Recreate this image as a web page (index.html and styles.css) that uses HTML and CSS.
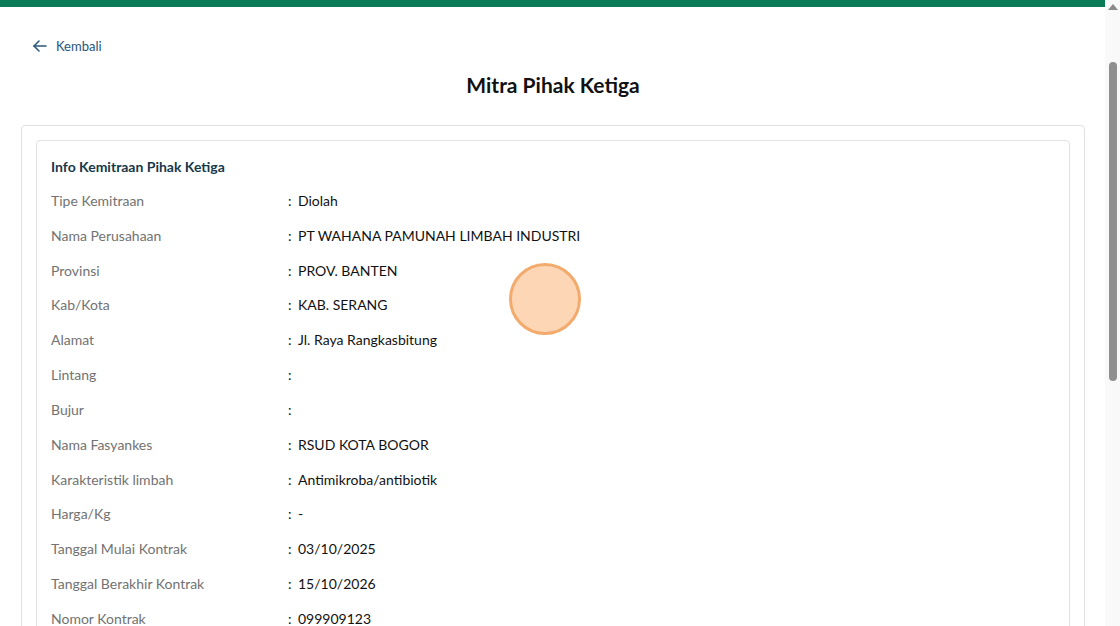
FILE: index.html
```html
<!DOCTYPE html>
<html lang="id">
<head>
    <meta charset="UTF-8">
    <meta name="viewport" content="width=device-width, initial-scale=1.0">
    <title>Mitra Pihak Ketiga</title>
    <link rel="stylesheet" href="styles.css">
</head>
<body>
    <div class="topbar"></div>

    <div class="container">
        <a href="#" class="back-link">
            <svg width="16" height="16" viewBox="0 0 16 16" fill="none" stroke="currentColor" stroke-width="1.5" stroke-linecap="round" stroke-linejoin="round">
                <path d="M14 8H2"/>
                <path d="M7 3L2 8l5 5"/>
            </svg>
            <span>Kembali</span>
        </a>

        <h1 class="page-title">Mitra Pihak Ketiga</h1>

        <div class="card">
            <div class="card-inner">
                <div class="card-title">Info Kemitraan Pihak Ketiga</div>

                <div class="info-row"><div class="label">Tipe Kemitraan</div><div class="sep">:</div><div class="value">Diolah</div></div>
                <div class="info-row"><div class="label">Nama Perusahaan</div><div class="sep">:</div><div class="value">PT WAHANA PAMUNAH LIMBAH INDUSTRI</div></div>
                <div class="info-row"><div class="label">Provinsi</div><div class="sep">:</div><div class="value">PROV. BANTEN</div></div>
                <div class="info-row"><div class="label">Kab/Kota</div><div class="sep">:</div><div class="value">KAB. SERANG</div></div>
                <div class="info-row"><div class="label">Alamat</div><div class="sep">:</div><div class="value">Jl. Raya Rangkasbitung</div></div>
                <div class="info-row"><div class="label">Lintang</div><div class="sep">:</div><div class="value"></div></div>
                <div class="info-row"><div class="label">Bujur</div><div class="sep">:</div><div class="value"></div></div>
                <div class="info-row"><div class="label">Nama Fasyankes</div><div class="sep">:</div><div class="value">RSUD KOTA BOGOR</div></div>
                <div class="info-row"><div class="label">Karakteristik limbah</div><div class="sep">:</div><div class="value">Antimikroba/antibiotik</div></div>
                <div class="info-row"><div class="label">Harga/Kg</div><div class="sep">:</div><div class="value">-</div></div>
                <div class="info-row"><div class="label">Tanggal Mulai Kontrak</div><div class="sep">:</div><div class="value">03/10/2025</div></div>
                <div class="info-row"><div class="label">Tanggal Berakhir Kontrak</div><div class="sep">:</div><div class="value">15/10/2026</div></div>
                <div class="info-row"><div class="label">Nomor Kontrak</div><div class="sep">:</div><div class="value">099909123</div></div>
            </div>
        </div>
    </div>

    <div class="click-marker"></div>

    <div class="scrollbar">
        <div class="scroll-arrow"></div>
        <div class="scroll-thumb"></div>
    </div>
</body>
</html>
```

FILE: styles.css
```css
* {
    margin: 0;
    padding: 0;
    box-sizing: border-box;
    font-family: 'Lato', 'Noto Sans', sans-serif;
}

html, body {
    height: 100%;
    overflow: hidden;
}

body {
    background-color: #fff;
    color: #1a1a1a;
    padding-right: 15px;
}

.topbar {
    height: 7px;
    background-color: #0b7b57;
}

.container {
    padding: 30px 20px 40px 21px;
}

.back-link {
    display: inline-flex;
    align-items: center;
    gap: 8px;
    margin-left: 11px;
    margin-top: 1px;
    color: #27557c;
    font-size: 13px;
    text-decoration: none;
}

.back-link svg {
    display: block;
}

.page-title {
    text-align: center;
    font-size: 21px;
    font-weight: 700;
    color: #111;
    margin-top: 15px;
    margin-bottom: 28px;
}

.card {
    border: 1px solid #e2e2e2;
    border-radius: 4px;
    padding: 14px 14px 20px;
}

.card-inner {
    border: 1px solid #e2e2e2;
    border-radius: 4px;
    padding: 17px 14px 10px;
}

.card-title {
    font-size: 14px;
    font-weight: 700;
    color: #17384a;
    margin-bottom: 8px;
}

.info-row {
    display: flex;
    align-items: center;
    height: 34.83px;
    font-size: 14px;
}

.label {
    width: 237px;
    color: #727272;
}

.sep {
    width: 10px;
    color: #111;
}

.value {
    color: #111;
}

.click-marker {
    position: absolute;
    left: 509px;
    top: 263px;
    width: 72px;
    height: 72px;
    border-radius: 50%;
    background-color: #fdd6b6;
    border: 3px solid #f2ab6d;
}

.scrollbar {
    position: fixed;
    top: 0;
    right: 0;
    width: 15px;
    height: 100%;
    background-color: #f9f9f9;
}

.scroll-arrow {
    width: 0;
    height: 0;
    margin: 4px auto 0;
    border-left: 5px solid transparent;
    border-right: 5px solid transparent;
    border-bottom: 6px solid #8a8a8a;
}

.scroll-thumb {
    position: absolute;
    top: 62px;
    left: 4px;
    width: 8px;
    height: 319px;
    border-radius: 4px;
    background-color: #8f8f8f;
}
```
